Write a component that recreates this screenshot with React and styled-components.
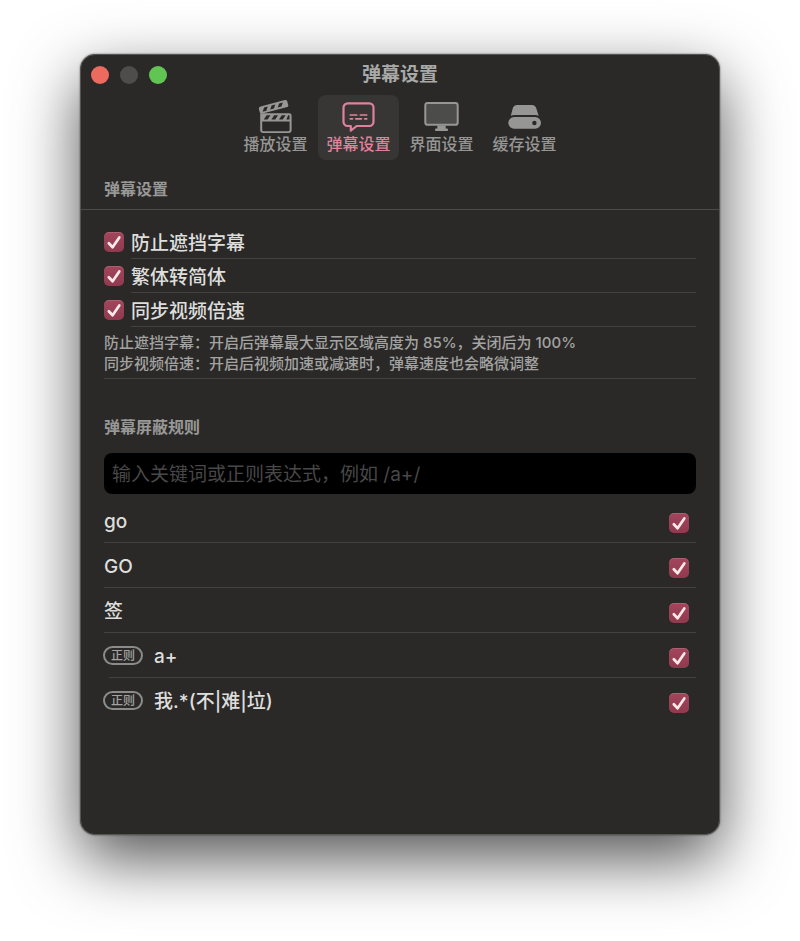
import React, { useState } from 'react'
import styled, { createGlobalStyle } from 'styled-components'

const GlobalStyle = createGlobalStyle`
  * {
    box-sizing: border-box;
  }
  body {
    margin: 0;
    background: #fff;
    font-family: Inter, 'Noto Sans CJK SC', sans-serif;
  }
`

const Page = styled.div`
  padding: 54px 80px 106px;
`

const Window = styled.main`
  padding-bottom: 111px;
  background: #2a2927;
  border: 1px solid #555553;
  border-radius: 15px;
  color: #dededd;
  box-shadow: 0 0 2px rgba(0, 0, 0, 0.6), 0 24px 64px rgba(0, 0, 0, 0.68);
`

const TitleBar = styled.header`
  display: grid;
  grid-template-columns: 1fr auto 1fr;
  align-items: center;
  height: 40px;
  padding: 0 10px;
`

const Lights = styled.div`
  display: flex;
  gap: 11px;
`

const Light = styled.button`
  width: 18px;
  height: 18px;
  padding: 0;
  border: 0;
  border-radius: 50%;
  background: ${({ $color }) => $color};
`

const Title = styled.h1`
  margin: 0;
  font-size: 19px;
  line-height: 24px;
  font-weight: 700;
  color: #a9a9a8;
`

const Tabs = styled.nav`
  display: flex;
  justify-content: center;
  gap: 2px;
`

const Tab = styled.button`
  display: flex;
  flex-direction: column;
  align-items: center;
  width: 81px;
  padding: 5px 0 6px;
  border: 0;
  border-radius: 8px;
  background: ${({ $active }) => ($active ? '#373635' : 'transparent')};
  color: ${({ $active }) => ($active ? '#de839b' : '#969695')};
  font-family: inherit;
  font-size: 16px;
  line-height: 20px;
  font-weight: 500;
`

const SectionTitle = styled.h2`
  margin: 0;
  font-size: 16px;
  line-height: 24px;
  font-weight: 700;
  color: #989897;
`

const SectionBar = styled.div`
  padding: 17px 23px 8px;
  border-bottom: 1px solid #4c4b4a;
`

const Content = styled.div`
  padding: 15px 23px 0;
`

const Option = styled.label`
  display: flex;
  align-items: center;
  gap: 7px;
`

const OptionText = styled.span`
  flex: 1;
  padding-top: 5px;
  border-bottom: 1px solid #434241;
  font-size: 19px;
  line-height: 28px;
  font-weight: 500;
`

const Note = styled.p`
  margin: 0 0 36px;
  padding: 5px 0 4px;
  border-bottom: 1px solid #434241;
  font-size: 15px;
  line-height: 21px;
  font-weight: 500;
  color: #a3a3a2;
`

const KeywordInput = styled.input`
  display: block;
  width: 100%;
  height: 41px;
  margin: 14px 0 4px;
  padding: 2px 8px 0;
  border: 0;
  border-radius: 8px;
  background: #000;
  color: #dededd;
  font-family: inherit;
  font-size: 19px;
  &::placeholder {
    color: #484848;
  }
`

const Rules = styled.ul`
  margin: 0;
  padding: 0;
  list-style: none;
`

const Rule = styled.li`
  border-bottom: 1px solid transparent;
  border-image: linear-gradient(
      to right,
      transparent ${({ $inset }) => $inset},
      ${({ $last }) => ($last ? 'transparent' : '#434241')} ${({ $inset }) => $inset}
    )
    1;
`

const RuleLabel = styled.label`
  display: flex;
  align-items: center;
  gap: 11px;
  padding: 11px 7px 6px 0;
`

const RuleText = styled.span`
  flex: 1;
  padding-bottom: 1px;
  font-size: 19px;
  line-height: 26px;
  font-weight: 500;
`

const Badge = styled.span`
  padding: 0 6px;
  border: 2px solid #8b8b8a;
  border-radius: 10px;
  margin: 0 0 4px -1px;
  color: #a3a3a2;
  font-size: 12px;
  line-height: 15px;
  font-weight: 500;
`

const Box = styled.span`
  display: grid;
  width: 20px;
  height: 20px;
  & > * {
    grid-area: 1 / 1;
  }
  input:not(:checked) + svg {
    visibility: hidden;
  }
`

const BoxInput = styled.input`
  appearance: none;
  width: 20px;
  height: 20px;
  margin: 0;
  border-radius: 5px;
  background: #4b4a49;
  box-shadow: inset 0 1px 0 rgba(255, 255, 255, 0.14);
  &:checked {
    background: linear-gradient(#a2455b, #903a4f);
  }
`

const Tick = styled.svg`
  z-index: 1;
  pointer-events: none;
`

const Checkbox = (props) => (
  <Box>
    <BoxInput type="checkbox" {...props} />
    <Tick width="20" height="20" viewBox="0 0 20 20" fill="none">
      <path d="M4.8 11.2 8.6 15.2 15.3 5.4" stroke="#fbe9ea" strokeWidth="2.7" strokeLinecap="round" strokeLinejoin="round" />
    </Tick>
  </Box>
)

const ClapperIcon = () => (
  <svg width="36" height="34" viewBox="0 0 36 34" fill="currentColor" fillRule="evenodd">
    <path d="M2.200 13.200h29.200a2.200 2.200 0 0 1 2.200 2.200V30a3 3 0 0 1-3 3H5.200a3 3 0 0 1-3-3ZM4.200 21.600V30a1.200 1.200 0 0 0 1.200 1.200h25a1.200 1.200 0 0 0 1.200-1.200v-8.400ZM8.600 15.200 5.800 19.400h3.800l2.800-4.200ZM16.200 15.200l-2.800 4.200h3.800l2.800-4.200ZM23.800 15.200 21 19.400h3.800l2.800-4.200ZM30.200 15.200l-1.900 4.200h3.200v-4.200Z" />
    <path
      transform="rotate(-15 2 14)"
      d="M4.400 7h25.200a2 2 0 0 1 2 2v3.800a1.400 1.400 0 0 1-1.400 1.400H3.600L2.200 12.800V9.200A2.200 2.200 0 0 1 4.400 7ZM7.600 8.800 5.200 12.400h3.800l2.400-3.600ZM15.400 8.800 13 12.400h3.800l2.400-3.600ZM23.200 8.800l-2.400 3.600h3.800l2.400-3.600Z"
    />
  </svg>
)

const BubbleIcon = () => (
  <svg width="36" height="34" viewBox="0 0 36 34" fill="none" stroke="currentColor" strokeWidth="2.2" strokeLinecap="round" strokeLinejoin="round">
    <path d="M6.700 3.400h21.600a4.200 4.200 0 0 1 4.200 4.200v14.200a4.200 4.200 0 0 1-4.200 4.200H15.700l-5.900 4.700V26H6.700A4.200 4.200 0 0 1 2.500 21.800V7.600a4.200 4.200 0 0 1 4.200-4.200Z" />
    <path d="M9.300 15h6.400M19.300 15h6.400M9.300 18.800h2.200M14.800 18.800h5.600M23.700 18.800h2" strokeWidth="1.700" />
  </svg>
)

const DisplayIcon = () => (
  <svg width="36" height="34" viewBox="0 0 36 34">
    <rect x="1.300" y="3" width="32.400" height="21.800" rx="2.400" fill="#4c4d4b" stroke="currentColor" strokeWidth="2" />
    <path d="M13.300 25.500h8.400v3h1.200q1.200 0 1.200 1.200t-1.200 1.200H12.100q-1.200 0-1.200-1.200t1.200-1.200h1.200Z" fill="currentColor" />
  </svg>
)

const DriveIcon = () => (
  <svg width="36" height="34" viewBox="0 0 36 34" fill="currentColor">
    <path d="M9.700 5h15.600q2.800 0 3.700 2.600l2.700 8.100q-1.500-.7-3.700-.7H7.500q-2.200 0-3.700.7L6 7.600Q6.900 5 9.700 5Z" />
    <path fillRule="evenodd" d="M7.200 16.900h20.900a5.900 5.900 0 0 1 0 11.800H7.200a5.900 5.900 0 0 1 0-11.800Zm20.200 3.900a2.200 2.200 0 1 0 0 4.400 2.200 2.200 0 0 0 0-4.400Z" />
  </svg>
)

const tabs = [
  { name: '播放设置', Icon: ClapperIcon },
  { name: '弹幕设置', Icon: BubbleIcon },
  { name: '界面设置', Icon: DisplayIcon },
  { name: '缓存设置', Icon: DriveIcon },
]

const options = ['防止遮挡字幕', '繁体转简体', '同步视频倍速']

const rules = [
  { text: 'go' },
  { text: 'GO' },
  { text: '签' },
  { text: 'a+', regex: true },
  { text: '我.*(不|难|垃)', regex: true },
]

export default function App() {
  const [active, setActive] = useState('弹幕设置')

  return (
    <>
      <GlobalStyle />
      <Page lang="zh-CN">
        <Window>
          <TitleBar>
            <Lights>
              <Light $color="#ec6a5e" aria-label="关闭" />
              <Light $color="#4e4d4b" aria-label="最小化" />
              <Light $color="#61c554" aria-label="缩放" />
            </Lights>
            <Title>弹幕设置</Title>
          </TitleBar>
          <Tabs>
            {tabs.map(({ name, Icon }) => (
              <Tab key={name} $active={name === active} onClick={() => setActive(name)}>
                <Icon />
                {name}
              </Tab>
            ))}
          </Tabs>
          <SectionBar>
            <SectionTitle>弹幕设置</SectionTitle>
          </SectionBar>
          <Content>
            {options.map((name) => (
              <Option key={name}>
                <Checkbox defaultChecked />
                <OptionText>{name}</OptionText>
              </Option>
            ))}
            <Note>
              防止遮挡字幕：开启后弹幕最大显示区域高度为 85%，关闭后为 100%
              <br />
              同步视频倍速：开启后视频加速或减速时，弹幕速度也会略微调整
            </Note>
            <SectionTitle>弹幕屏蔽规则</SectionTitle>
            <KeywordInput
              type="text"
              aria-label="弹幕屏蔽规则"
              placeholder="输入关键词或正则表达式，例如 /a+/"
            />
            <Rules>
              {rules.map(({ text, regex }, i) => (
                <Rule key={text} $inset={regex ? '6px' : '0px'} $last={i === rules.length - 1}>
                  <RuleLabel>
                    {regex && <Badge>正则</Badge>}
                    <RuleText>{text}</RuleText>
                    <Checkbox defaultChecked />
                  </RuleLabel>
                </Rule>
              ))}
            </Rules>
          </Content>
        </Window>
      </Page>
    </>
  )
}
